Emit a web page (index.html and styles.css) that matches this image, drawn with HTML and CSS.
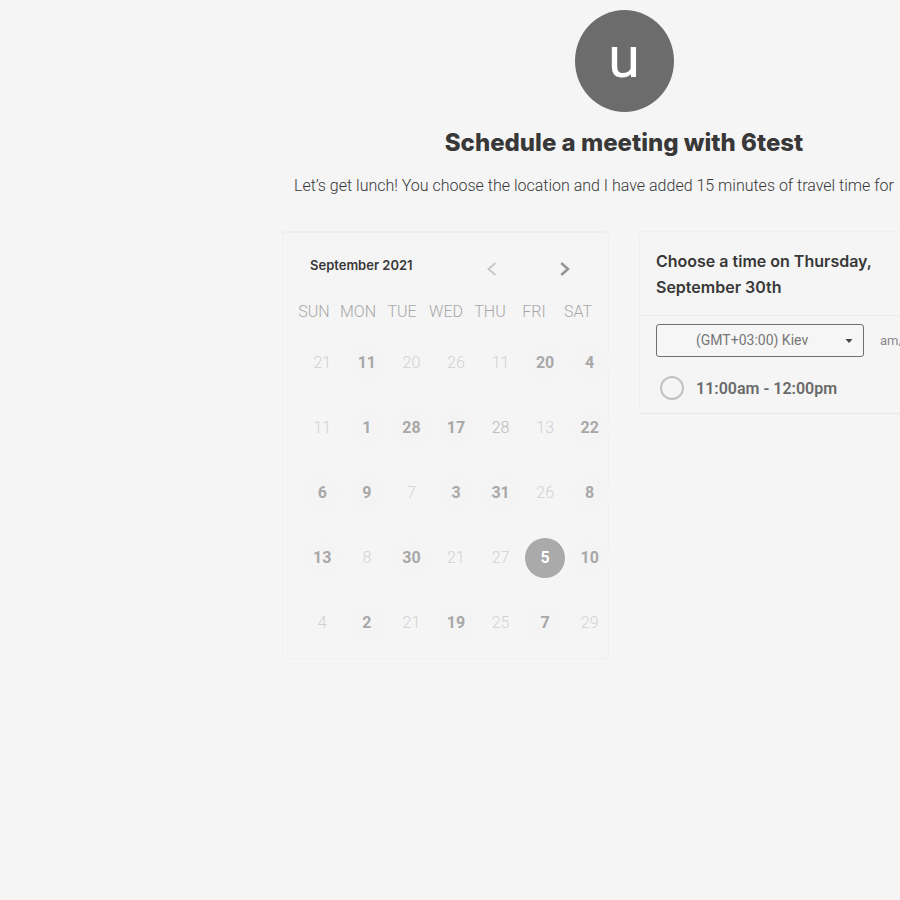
FILE: index.html
```html
<!DOCTYPE html>
<html lang="en">
<head>
<meta charset="utf-8">
<title>Schedule a meeting</title>
<link rel="stylesheet" href="styles.css">
</head>
<body>
<main class="scheduler">
  <header class="intro">
    <div class="avatar">u</div>
    <h1 class="title">Schedule a meeting with 6test</h1>
    <p class="message">Let’s get lunch! You choose the location and I have added 15 minutes of travel time for</p>
  </header>
  <div class="panels">
    <section class="calendar">
      <div class="month-bar">
        <h2 class="month">September 2021</h2>
        <div class="month-nav">
          <button class="arrow arrow-prev" aria-label="Previous month"><svg width="10" height="14" viewBox="0 0 10 14"><path d="M8.500 1 1.500 7l7 6"/></svg></button>
          <button class="arrow arrow-next" aria-label="Next month"><svg width="10" height="14" viewBox="0 0 10 14"><path d="M1.200 1 8 7l-6.800 6"/></svg></button>
        </div>
      </div>
      <table class="days">
        <thead>
          <tr><th>SUN</th><th>MON</th><th>TUE</th><th>WED</th><th>THU</th><th>FRI</th><th>SAT</th></tr>
        </thead>
        <tbody>
          <tr><td>21</td><td><button class="day">11</button></td><td>20</td><td>26</td><td>11</td><td><button class="day">20</button></td><td><button class="day">4</button></td></tr>
          <tr><td>11</td><td><button class="day">1</button></td><td><button class="day">28</button></td><td><button class="day">17</button></td><td class="near">28</td><td>13</td><td><button class="day">22</button></td></tr>
          <tr><td><button class="day">6</button></td><td><button class="day">9</button></td><td>7</td><td><button class="day">3</button></td><td><button class="day">31</button></td><td>26</td><td><button class="day">8</button></td></tr>
          <tr><td><button class="day">13</button></td><td>8</td><td><button class="day">30</button></td><td>21</td><td>27</td><td><button class="day selected">5</button></td><td><button class="day">10</button></td></tr>
          <tr><td>4</td><td><button class="day">2</button></td><td>21</td><td><button class="day">19</button></td><td>25</td><td><button class="day">7</button></td><td>29</td></tr>
        </tbody>
      </table>
    </section>
    <section class="times">
      <h2 class="times-title">Choose a time on Thursday, September 30th</h2>
      <div class="times-body">
        <div class="zone-row">
          <div class="zone">
            <select class="zone-select" aria-label="Time zone"><option>(GMT+03:00) Kiev</option></select>
            <svg class="caret" width="8" height="4" viewBox="0 0 8 4"><path d="M.5 0h7L4 4z"/></svg>
          </div>
          <button class="format">am/pm</button>
        </div>
        <label class="slot"><input class="slot-radio" type="radio" name="slot"><span>11:00am - 12:00pm</span></label>
      </div>
    </section>
  </div>
</main>
</body>
</html>
```
FILE: styles.css
```css
* { box-sizing: border-box; }

body {
  margin: 0;
  background: #f5f5f5;
  color: #383838;
  font-family: Roboto, "Liberation Sans", sans-serif;
  font-size: 16px;
  overflow: hidden;
}

button, select, input { font: inherit; color: inherit; margin: 0; }
button { border: 0; padding: 0; background: none; cursor: pointer; }

.scheduler {
  min-width: 684px;
  margin-left: 282px;
  padding-top: 10px;
  width: max-content;
}

.intro {
  display: flex;
  flex-direction: column;
  align-items: center;
}

.avatar {
  width: 99px;
  height: 102px;
  border-radius: 50%;
  background: #6c6c6c;
  color: #fff;
  font-size: 58px;
  line-height: 94px;
  text-align: center;
}

.title {
  margin: 15px 0 0;
  font: 800 24px/32px Inter, sans-serif;
}

.message {
  align-self: flex-start;
  margin: 15px 0 0;
  padding-left: 12px;
  font-weight: 300;
  line-height: 24px;
  white-space: nowrap;
}

.panels {
  display: grid;
  grid-template-columns: 327px 327px;
  gap: 30px;
  align-items: start;
  margin-top: 33px;
}

.calendar, .times {
  border: 1px solid #f0f0f0;
  border-radius: 3px;
}

.calendar {
  border-top: 2px solid #eeeeee;
  padding-bottom: 3px;
}

.times { border-bottom-color: #e8e8e8; }

.month-bar {
  display: flex;
  justify-content: space-between;
  align-items: center;
  padding: 20px 38px 0 27px;
}

.month {
  margin: 0;
  font: 600 13px/24px Inter, sans-serif;
}

.month-nav {
  display: flex;
  gap: 63px;
  padding-top: 8px;
}

.arrow { display: block; width: 10px; height: 14px; }
.arrow svg { display: block; fill: none; }
.arrow-prev { stroke: #c8c8c8; stroke-width: 2; }
.arrow-next { stroke: #959595; stroke-width: 2.5; }

.days { display: block; margin-top: 23px; }
.days thead, .days tbody { display: block; }
.days tr { display: grid; }
.days th, .days td { padding: 0; text-align: center; }

.days thead tr {
  grid-template-columns: repeat(7, 44px);
  margin-left: 9px;
}

.days th {
  font-weight: 300;
  line-height: 24px;
  color: #a8a8a8;
}

.days tbody { margin: 6px -4px 0 17px; }

.days tbody tr {
  grid-template-columns: repeat(7, 1fr);
  height: 65px;
  align-items: center;
}

.days td { font-weight: 300; color: #d2d2d2; }
.days .near { color: #b8b8b8; }

.day {
  width: 40px;
  height: 40px;
  border-radius: 50%;
  background: #f4f4f4;
  font-weight: 700;
  color: #a8a8a8;
}

.day.selected { background: #aaaaaa; color: #fff; }

.times-title {
  margin: 0;
  padding: 16px 16px 15px;
  border-bottom: 1px solid #ececec;
  font: 600 16px/26px Inter, sans-serif;
}

.times-body { padding: 8px 16px 13px; }

.zone-row { display: flex; align-items: center; gap: 16px; }
.zone { position: relative; width: 208px; }

.zone-select {
  appearance: none;
  display: block;
  width: 100%;
  height: 33px;
  padding: 0 24px 2px 39px;
  border: 1px solid #707070;
  border-radius: 3px;
  background: #f6f6f6;
  font-size: 14px;
  color: #777;
}

.caret { position: absolute; right: 11px; top: 15px; fill: #444; }
.format { font-size: 13px; color: #8a8a8a; }

.slot {
  display: flex;
  align-items: center;
  gap: 12px;
  margin-top: 19px;
  padding-left: 4px;
  font-weight: 600;
  color: #6a6a6a;
}

.slot-radio {
  appearance: none;
  width: 24px;
  height: 24px;
  border: 2px solid #c2c2c2;
  border-radius: 50%;
}
```
